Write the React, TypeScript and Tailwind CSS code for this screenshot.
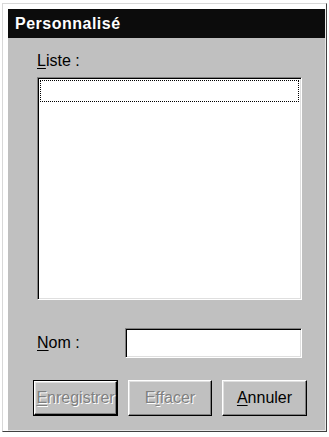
const sunken =
  "border border-t-[#808080] border-l-[#808080] border-b-white border-r-white shadow-[inset_1px_1px_0_#000,inset_-1px_-1px_0_#dfdfdf] bg-white";

type ButtonProps = {
  label: React.ReactNode;
  disabled?: boolean;
  isDefault?: boolean;
  width: string;
};

const Win95Button = ({ label, disabled, isDefault, width }: ButtonProps) => {
  return (
    <div
      className={`${width} h-[36px] ${
        isDefault ? "border border-black" : ""
      } flex`}
    >
      <button
        className={`flex-1 flex items-center justify-center bg-[#c0c0c0] border border-t-white border-l-white border-b-black border-r-black shadow-[inset_-1px_-1px_0_#808080,inset_1px_1px_0_#dfdfdf] text-[16px] leading-[18px] whitespace-nowrap overflow-visible ${
          disabled
            ? "text-[#808080] [text-shadow:1px_1px_0_#fff]"
            : "text-black"
        }`}
      >
        {label}
      </button>
    </div>
  );
};

const App = () => {
  return (
    <div className="w-[329px] h-[437px] bg-white pl-[2px] pt-[3px] font-['Liberation_Sans',Arial,sans-serif] overflow-hidden">
      <div className="w-[325px] h-[429px] border-l border-t border-[#d8d8d8] border-r border-b border-r-[#404040] border-b-[#404040] pl-[5px] pt-[5px] bg-white">
        <div className="w-[318px] h-[422px] bg-[#c0c0c0] border-r border-b border-r-[#e8e8e8] border-b-[#e8e8e8] flex flex-col">
          <div className="h-[29px] bg-[#0c0c0c] text-white font-bold text-[16px] tracking-[0.5px] leading-[29px] pl-[7px]">
            Personnalisé
          </div>

          <div className="pl-[29px] mt-[14px] text-[16px] leading-[18px] text-black">
            <u className="underline-offset-2">L</u>iste :
          </div>

          <div className={`ml-[29px] mt-[7px] w-[265px] h-[223px] ${sunken} p-[2px]`}>
            <div className="h-[22px] border border-dotted border-black" />
          </div>

          <div className="flex items-center pl-[29px] mt-[28px]">
            <div className="w-[88px] text-[16px] leading-[18px] text-black">
              <u className="underline-offset-2">N</u>om :
            </div>
            <div className={`w-[177px] h-[30px] ${sunken}`} />
          </div>

          <div className="flex pl-[25px] mt-[22px] gap-[10px]">
            <Win95Button
              width="w-[85px]"
              isDefault
              disabled
              label={
                <span>
                  <u className="underline-offset-2">E</u>nregistrer
                </span>
              }
            />
            <Win95Button
              width="w-[84px]"
              disabled
              label={
                <span>
                  E<u className="underline-offset-2">f</u>facer
                </span>
              }
            />
            <Win95Button
              width="w-[85px]"
              label={
                <span>
                  <u className="underline-offset-2">A</u>nnuler
                </span>
              }
            />
          </div>
        </div>
      </div>
    </div>
  );
};

export default App;
